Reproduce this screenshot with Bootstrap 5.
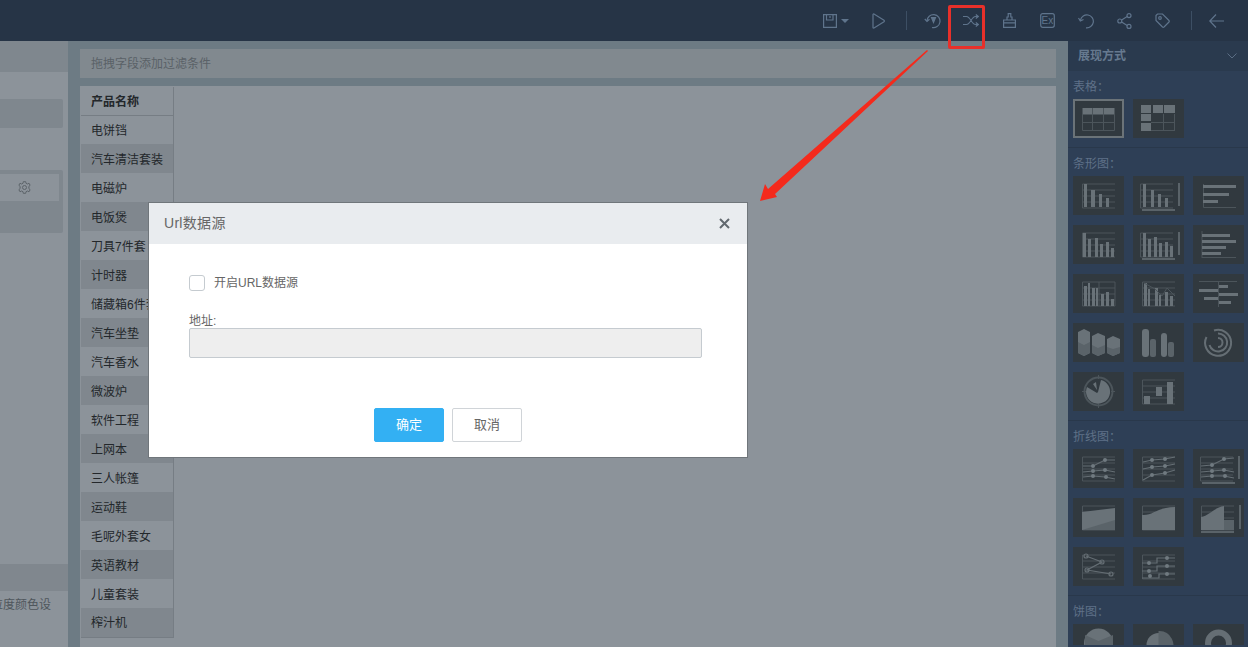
<!DOCTYPE html>
<html lang="zh">

<head>
  <meta charset="UTF-8" />
  <title>Url数据源</title>
  <link href="https://cdn.jsdelivr.net/npm/bootstrap@5.3.2/dist/css/bootstrap.min.css" rel="stylesheet">
  <style>
    html, body {
      height: 647px;
      overflow: hidden;
    }

    body {
      position: relative;
      width: 1248px;
      background: #6d7b84;
      font-family: "Liberation Sans", "Noto Sans CJK SC", sans-serif;
      font-size: 12px;
      color: #555;
    }

    /* 顶部工具栏 */
    .top-bar {
      height: 41px;
      background: #263446;
      color: #5f748c;
      padding-right: 8px;
    }

    .tb-slot {
      width: 38.25px;
    }

    .tb-save {
      width: 40px;
      padding-left: 2.5px;
    }

    .tb-play {
      width: 36px;
    }

    .tb-back {
      width: 48px;
    }

    .tb-sep {
      width: 1px;
      height: 19px;
      background: #3d4f64;
    }

    .tb-sep-first {
      margin: 0 7px 0 9px;
    }

    .tb-sep-last {
      margin-left: 9.5px;
    }

    .tb-svg {
      fill: none;
      stroke: currentColor;
      stroke-width: 1.2;
    }

    .tb-svg text {
      fill: currentColor;
      stroke: none;
      font-size: 10px;
      font-family: "Liberation Sans", sans-serif;
    }

    .caret-shape {
      width: 0;
      height: 0;
      border-left: 4px solid transparent;
      border-right: 4px solid transparent;
      border-top: 4px solid #5f748c;
    }

    .work-area {
      height: 606px;
    }

    /* 左侧面板 */
    .left-pane {
      width: 68px;
      background: #8c939a;
      overflow: hidden;
    }

    .left-head {
      height: 31px;
      background: #7f878e;
    }

    .left-block {
      margin-top: 27px;
      margin-right: 5px;
      height: 29px;
      background: #7f878e;
      border-radius: 0 2px 2px 0;
    }

    .left-block-tall {
      margin-top: 42px;
      margin-right: 5px;
      height: 63px;
      background: #7f878e;
      border-radius: 0 2px 2px 0;
      padding: 4px 4px 0 0;
    }

    .left-row {
      height: 27px;
      background: #8c939a;
      color: #5d646a;
      padding-left: 18px;
    }

    .left-band {
      margin-top: 331px;
      height: 27px;
      background: #80878e;
    }

    .left-note {
      margin-top: 5px;
      padding-right: 17px;
      height: 18px;
      line-height: 18px;
      white-space: nowrap;
      color: #4f565c;
    }

    /* 中间区域 */
    .center-pane {
      width: 1000px;
      padding: 8px 12px 0;
    }

    .filter-bar {
      height: 29px;
      line-height: 30px;
      padding-left: 11px;
      background: #81898f;
      color: #5a6167;
      margin-bottom: 8px;
    }

    .canvas-box {
      height: 561px;
      background: #8c939a;
      padding: 1px 0 0 1px;
    }

    .prod-table {
      width: 93px;
      table-layout: fixed;
      border-right: 1px solid #767d84;
      border-bottom: 1px solid #767d84;
    }

    .prod-table th,
    .prod-table td {
      height: 29px;
      padding: 2px 0 0 10px;
      line-height: 20px;
      vertical-align: middle;
      font-size: 12px;
      white-space: nowrap;
      overflow: hidden;
      color: #23272b;
      background: #8c939a;
      border: 0;
      box-shadow: none;
    }

    .prod-table th {
      height: 28px;
      font-weight: 700;
      border-bottom: 1px solid #767d84;
    }

    .prod-table tbody tr:nth-child(even) td {
      background: #80878e;
    }

    /* 右侧展现方式 */
    .view-pane {
      width: 180px;
      background: #2e3f56;
      overflow: hidden;
    }

    .view-head {
      height: 30px;
      padding: 0 11px 0 10px;
      background: #2a3a4e;
      color: #66798f;
      font-weight: 700;
    }

    .view-sec {
      padding: 4px 4px 9px 5px;
      border-bottom: 1px solid #29384b;
    }

    .view-sec-first {
      padding-top: 6px;
    }

    .view-label {
      height: 18px;
      line-height: 21px;
      margin-bottom: 6px;
      color: #5f7188;
      font-family: "Noto Sans CJK TC", sans-serif;
    }

    .view-sec-first .view-label {
      margin-bottom: 4px;
      line-height: 18px;
    }

    .tile-grid {
      display: grid;
      grid-template-columns: repeat(3, 51px);
      column-gap: 9px;
      row-gap: 10px;
    }

    .chart-tile {
      display: block;
      width: 51px;
      height: 39px;
      background: #31393f;
    }

    .tile-cut {
      height: 21px;
    }

    .tile-on {
      outline: 2px solid #6b7378;
      outline-offset: -2px;
    }

    .ln {
      fill: none;
      stroke: #4c555b;
      stroke-width: 1;
    }

    .ls {
      fill: none;
      stroke: #656e74;
      stroke-width: 1.2;
    }

    .fl {
      fill: #697278;
    }

    .fd {
      fill: #5a6369;
    }

    .dt {
      fill: none;
      stroke: #707a80;
      stroke-width: 4;
      stroke-linecap: round;
    }

    .rg {
      fill: none;
      stroke: #656e74;
      stroke-width: 2;
    }

    /* 弹窗 */
    .url-dialog {
      position: absolute;
      left: 148px;
      top: 202px;
      width: 600px;
      height: 256px;
      border: 1px solid #70767b;
      border-radius: 0;
      background: #fff;
    }

    .url-head {
      height: 41px;
      padding: 0 17px 0 15px;
      background: #e9ecef;
      border: 0;
      border-radius: 0;
    }

    .url-title {
      font-size: 14px;
      letter-spacing: .3px;
      color: #666;
    }

    .url-close {
      padding: 0;
      border: 0;
      background: none;
      line-height: 0;
    }

    .url-body {
      padding: 30px 45px 0 40px;
    }

    .url-check {
      width: 16px;
      height: 16px;
      margin: 0 9px 0 0;
      border: 1px solid #c5cbd0;
      border-radius: 2px;
    }

    .url-label {
      color: #666;
    }

    .url-addr-label {
      margin: 21px 0 0;
      height: 15px;
      line-height: 17px;
      color: #666;
    }

    .url-input {
      height: 30px;
      border: 1px solid #c5cbd0;
      border-radius: 2px;
    }

    .url-input:disabled {
      background: #eee;
    }

    .url-foot {
      margin-top: 50px;
      padding-left: 5px;
    }

    .url-btn {
      width: 70px;
      height: 34px;
      padding: 0;
      font-size: 13px;
      border-radius: 2px;
    }

    .url-ok,
    .url-ok:hover {
      background: #33b0f3;
      border-color: #33b0f3;
      color: #fff;
    }

    .url-cancel,
    .url-cancel:hover {
      background: #fff;
      border: 1px solid #d0d4d8;
      color: #666;
    }

    /* 标注 */
    .mark-box {
      position: absolute;
      left: 948px;
      top: 5px;
      width: 37px;
      height: 44px;
      border: 3px solid #e8302a;
      border-radius: 2px;
    }

    .mark-arrow {
      position: absolute;
      left: 0;
      top: 0;
      pointer-events: none;
    }
  </style>
</head>

<body>
  <!-- 图表缩略图 -->
  <svg width="0" height="0" class="d-block position-absolute">
    <defs>
      <g id="grid">
        <path class="ln" d="M9.5 8H42M9.5 14H42M9.5 20H42M9.5 26H42M9.5 32H42M9.5 8V32" />
      </g>
      <g id="legend">
        <path class="fd" d="M45 7h2v23h-2zM9 33h33v2H9z" />
      </g>
      <symbol id="t1" viewBox="0 0 51 39">
        <path class="fl" d="M9 9h10v6H9zM20 9h10v6H20zM31 9h10v6H31z" />
        <path class="ln" d="M9.500 9V31.500H41.500V9M9.500 15.500H41.500M9.500 23.500H41.500M19.500 9V31M30.500 9V31" />
      </symbol>
      <symbol id="t2" viewBox="0 0 51 39">
        <path class="fl" d="M8 6h10v8H8zM20 6h10v8H20zM31 6h11v8H31zM8 15h10v7H8zM8 24h10v8H8z" />
        <path class="ln" d="M18 23.500H42M18 31.500H42M30.500 15V32M41.500 15V32" />
      </symbol>
      <symbol id="b1" viewBox="0 0 51 39">
        <use href="#grid" />
        <path class="fl" d="M11 8h3v23h-3zM18 14h4v17h-4zM26 18h3v13h-3zM33 22h3v9h-3z" />
      </symbol>
      <symbol id="b2" viewBox="0 0 51 39">
        <use href="#grid" x="-2" />
        <use href="#legend" />
        <path class="fl" d="M10 8h3v23h-3zM18 14h3v17h-3zM25 18h3v13h-3zM32 22h3v9h-3z" />
      </symbol>
      <symbol id="b3" viewBox="0 0 51 39">
        <path class="ln" d="M10.500 8V31.500H43" />
        <path class="fl" d="M10 9h33v3H10zM10 17h26v3H10zM10 24h15v3H10z" />
      </symbol>
      <symbol id="b4" viewBox="0 0 51 39">
        <use href="#grid" />
        <path class="fl" d="M10 8h3v24h-3zM15 14h3v18h-3zM22 13h3v19h-3zM27 19h3v13h-3zM33 17h3v15h-3zM38 23h3v9h-3z" />
      </symbol>
      <symbol id="b5" viewBox="0 0 51 39">
        <use href="#grid" x="-2" />
        <use href="#legend" />
        <path class="fl" d="M10 8h3v24h-3zM15 14h3v18h-3zM21 12h3v20h-3zM26 18h3v14h-3zM32 17h3v15h-3zM37 21h3v11h-3z" />
      </symbol>
      <symbol id="b6" viewBox="0 0 51 39">
        <path class="ln" d="M9 32.500H43M9 6V33" />
        <path class="fl" d="M9 9h28v3H9zM9 15h34v3H9zM9 21h24v3H9zM9 27h19v3H9z" />
      </symbol>
      <symbol id="b7" viewBox="0 0 51 39">
        <use href="#grid" />
        <path class="ln" d="M42 8V32M26 8V32" />
        <path class="fl" d="M11 12h3v20h-3zM15 9h2v23h-2zM19 14h3v18h-3zM23 14h2v18h-2zM28 20h3v12h-3zM33 18h3v14h-3zM38 25h3v7h-3z" />
      </symbol>
      <symbol id="b8" viewBox="0 0 51 39">
        <use href="#grid" />
        <path class="fl" d="M11 9h3v23h-3zM15 15h2v17h-2zM22 14h3v18h-3zM26 21h2v11h-2zM32 18h3v14h-3zM37 22h3v10h-3z" />
        <path class="ln" d="M11 9L22 15L29 22L34 14L42 22" />
      </symbol>
      <symbol id="b9" viewBox="0 0 51 39">
        <path class="ln" d="M6 7.500H44M25.500 7V33" />
        <path class="fl" d="M26 11h9v3h-9zM6 15h19v3H6zM26 19h19v3H26zM11 23h14v3H11zM26 27h12v3H26z" />
      </symbol>
      <symbol id="c1" viewBox="0 0 51 39">
        <path class="fl" d="M5 9L11 6L17 9V30L11 33L5 30zM19 13L25 10L32 13V30L25 33L19 30zM34 16L40 13L47 16V30L40 33L34 30z" />
        <path class="fd" d="M5 19L11 22L17 19V30L11 33L5 30zM19 22L25 25L32 22V30L25 33L19 30zM34 24L40 26L47 24V30L40 33L34 30z" />
      </symbol>
      <symbol id="c2" viewBox="0 0 51 39">
        <rect class="fl" x="9" y="6" width="7" height="28" rx="3" />
        <rect class="fd" x="17" y="16" width="6" height="18" rx="2" />
        <rect class="fl" x="28" y="10" width="6" height="24" rx="3" />
        <rect class="fd" x="35" y="19" width="6" height="15" rx="2" />
      </symbol>
      <symbol id="c3" viewBox="0 0 51 39">
        <path class="rg" d="M21 7.500A13 13 0 1 1 13.500 14" />
        <path class="rg" d="M25 10.500A9 9 0 1 1 16.500 22" />
        <path class="rg" d="M25 15A4.500 4.500 0 0 1 25 24" />
      </symbol>
      <symbol id="c4" viewBox="0 0 51 39">
        <circle class="ln" cx="25.500" cy="19.500" r="14" style="stroke-width:2" />
        <path class="fl" d="M25 20L28 8A12 12 0 1 1 14 15L24 21z" />
        <path class="fl" d="M20 12l3-2l1 8z" />
        <path class="ln" d="M25.500 3V7M25.500 32V36M9 19.500H13M38 19.500H42" />
      </symbol>
      <symbol id="c5" viewBox="0 0 51 39">
        <use href="#grid" />
        <path class="fl" d="M11 24h6v8h-6zM23 15h6v9h-6zM34 10h6v22h-6z" />
      </symbol>
      <symbol id="l1" viewBox="0 0 51 39">
        <use href="#grid" />
        <path class="ls" d="M10 17L20 17L32 11L42 11M10 23L20 22L32 21L42 23M10 28L20 27L32 28L42 30" />
        <path class="dt" d="M20 17h0M32 11h0M20 22h0M32 21h0M20 27h0M33 28h0" />
      </symbol>
      <symbol id="l2" viewBox="0 0 51 39">
        <use href="#grid" />
        <path class="ls" d="M10 13L19 11L32 10L42 8M10 20L19 18L32 17L42 15M10 31L19 26L32 24L42 21" />
        <path class="dt" d="M19 11h0M32 10h0M19 18h0M32 17h0M19 26h0M32 24h0" />
      </symbol>
      <symbol id="l3" viewBox="0 0 51 39">
        <use href="#grid" x="-2" />
        <use href="#legend" />
        <path class="ls" d="M8 17L19 16L31 10L41 9M8 23L19 22L31 21L41 23M8 28L19 27L31 27L41 29" />
        <path class="dt" d="M19 16h0M31 10h0M19 22h0M31 21h0M19 27h0M32 27h0" />
      </symbol>
      <symbol id="a1" viewBox="0 0 51 39">
        <use href="#grid" />
        <path class="fl" d="M9 14L42 10V32H9z" />
        <path class="fd" d="M9 32L42 22V32z" />
      </symbol>
      <symbol id="a2" viewBox="0 0 51 39">
        <use href="#grid" />
        <path class="fl" d="M9 17C20 18 24 9 42 9V32H9z" />
      </symbol>
      <symbol id="a3" viewBox="0 0 51 39">
        <use href="#grid" x="-1" />
        <path class="fd" d="M46 7h2v24h-2zM8 33h33v2H8z" />
        <path class="fl" d="M8 19C16 18 22 9 31 8V32H8z" />
        <path class="fd" d="M31 22H41V32H31z" />
      </symbol>
      <symbol id="l7" viewBox="0 0 51 39">
        <use href="#grid" />
        <path class="ls" d="M13 9L29 15L14 23L38 27" />
        <circle class="ls" cx="13" cy="9" r="2" />
        <circle class="ls" cx="29" cy="15" r="2" />
        <circle class="ls" cx="14" cy="23" r="2" />
        <circle class="ls" cx="38" cy="27" r="2" />
      </symbol>
      <symbol id="l8" viewBox="0 0 51 39">
        <use href="#grid" />
        <path class="ls" d="M9 16H24V11H42M9 24H24V19H42M9 31H26V27H42" />
        <path class="dt" d="M16 16h0M34 11h0M16 24h0M34 19h0M17 29h0M34 27h0" />
      </symbol>
      <symbol id="p1" viewBox="0 0 51 39">
        <circle class="fl" cx="25.500" cy="19" r="14.500" />
        <path class="fd" d="M25.500 17L12 11V34H40V11z" />
      </symbol>
      <symbol id="p2" viewBox="0 0 51 39">
        <circle class="fl" cx="25.500" cy="21" r="12" />
        <path class="fd" d="M25.500 21V7A14 14 0 0 1 37 30z" />
      </symbol>
      <symbol id="p3" viewBox="0 0 51 39">
        <circle class="rg" cx="25.500" cy="19" r="10.500" style="stroke-width:6" />
      </symbol>
    </defs>
  </svg>

  <!-- 工具栏 -->
  <div class="top-bar d-flex align-items-center justify-content-end">
    <div class="tb-save d-flex align-items-center gap-1">
      <svg class="tb-svg" width="14" height="14" viewBox="0 0 14 14">
        <path d="M.6 .6H13.400V13.400H.6zM3.500 .6V6H10V.6" />
        <path d="M7 2V4" />
      </svg>
      <span class="caret-shape"></span>
    </div>
    <div class="tb-play d-flex justify-content-center">
      <svg class="tb-svg" width="13" height="16" viewBox="0 0 13 16">
        <path d="M1 1.500C1 1 1.500 .8 2 1L12 7.300C12.500 7.700 12.500 8.300 12 8.700L2 15C1.500 15.200 1 15 1 14.500z" />
      </svg>
    </div>
    <div class="tb-sep tb-sep-first"></div>
    <div class="tb-slot d-flex justify-content-center">
      <svg class="tb-svg" width="17" height="16" viewBox="0 0 17 16">
        <path d="M3 8A6.500 6.500 0 1 1 8 14.500" />
        <path d="M.8 6L3 8.500L5.500 6.300" />
        <path d="M7.500 4.500H11.500L9.500 9.500z" fill="currentColor" />
      </svg>
    </div>
    <div class="tb-slot d-flex justify-content-center">
      <svg class="tb-svg" width="16" height="13" viewBox="0 0 16 13">
        <path d="M0 2.500H3.500C7.500 2.500 8.500 10.500 12.500 10.500H15M0 10.500H3.500C7.500 10.500 8.500 2.500 12.500 2.500H15" />
        <path d="M12.800 .5L15.300 2.500L12.800 4.500M12.800 8.500L15.300 10.500L12.800 12.500" />
      </svg>
    </div>
    <div class="tb-slot d-flex justify-content-center">
      <svg class="tb-svg" width="13" height="15" viewBox="0 0 13 15">
        <path d="M.6 7H12.400V14.400H.6zM.6 9.800H12.400M4 7V4H5.200V.6H7.800V4H9V7" />
      </svg>
    </div>
    <div class="tb-slot d-flex justify-content-center">
      <svg class="tb-svg" width="15" height="15" viewBox="0 0 15 15">
        <rect x=".7" y=".7" width="13.600" height="13.600" rx="2" />
        <text x="1.500" y="11">Ex</text>
      </svg>
    </div>
    <div class="tb-slot d-flex justify-content-center">
      <svg class="tb-svg" width="16" height="16" viewBox="0 0 16 16">
        <path d="M2.500 7A6.500 6.500 0 1 1 8 14.800" />
        <path d="M.5 5L2.300 8L5.500 6.500" />
      </svg>
    </div>
    <div class="tb-slot d-flex justify-content-center">
      <svg class="tb-svg" width="15" height="16" viewBox="0 0 15 16">
        <circle cx="2.800" cy="8" r="2" />
        <circle cx="12" cy="2.600" r="2" />
        <circle cx="12" cy="13.400" r="2" />
        <path d="M4.600 7L10.200 3.600M4.600 9L10.200 12.400" />
      </svg>
    </div>
    <div class="tb-slot d-flex justify-content-center">
      <svg class="tb-svg" width="15" height="15" viewBox="0 0 15 15">
        <path d="M1 2.500L2.500 1H7.500L14 7.500C14.400 8 14.400 8.500 14 9L9 14C8.500 14.400 8 14.400 7.500 14L1 7.500z" />
        <circle cx="5" cy="5" r="1.300" />
      </svg>
    </div>
    <div class="tb-sep tb-sep-last"></div>
    <div class="tb-back d-flex justify-content-center">
      <svg class="tb-svg" width="15" height="14" viewBox="0 0 15 14">
        <path d="M15 7H1M7 .5L.8 7L7 13.500" />
      </svg>
    </div>
  </div>

  <div class="work-area d-flex">
    <!-- 左侧 -->
    <div class="left-pane">
      <div class="left-head"></div>
      <div class="left-block"></div>
      <div class="left-block-tall">
        <div class="left-row d-flex align-items-center">
          <svg width="13" height="13" viewBox="0 0 13 13" fill="none" stroke="currentColor">
            <circle cx="6.500" cy="6.500" r="2" />
            <path d="M5.300 .7H7.700L8 2.300L9.500 3L11 2.200L12.100 4.300L10.900 5.400V7.600L12.100 8.700L11 10.800L9.500 10L8 10.700L7.700 12.300H5.300L5 10.700L3.500 10L2 10.800L.9 8.700L2.100 7.600V5.400L.9 4.300L2 2.200L3.500 3L5 2.300z" />
          </svg>
        </div>
      </div>
      <div class="left-band"></div>
      <div class="left-note d-flex justify-content-end">粒度颜色设</div>
    </div>

    <!-- 中间 -->
    <div class="center-pane">
      <div class="filter-bar">拖拽字段添加过滤条件</div>
      <div class="canvas-box">
        <table class="table mb-0 prod-table">
          <thead>
            <tr><th>产品名称</th></tr>
          </thead>
          <tbody>
            <tr><td>电饼铛</td></tr>
            <tr><td>汽车清洁套装</td></tr>
            <tr><td>电磁炉</td></tr>
            <tr><td>电饭煲</td></tr>
            <tr><td>刀具7件套</td></tr>
            <tr><td>计时器</td></tr>
            <tr><td>储藏箱6件套</td></tr>
            <tr><td>汽车坐垫</td></tr>
            <tr><td>汽车香水</td></tr>
            <tr><td>微波炉</td></tr>
            <tr><td>软件工程</td></tr>
            <tr><td>上网本</td></tr>
            <tr><td>三人帐篷</td></tr>
            <tr><td>运动鞋</td></tr>
            <tr><td>毛呢外套女</td></tr>
            <tr><td>英语教材</td></tr>
            <tr><td>儿童套装</td></tr>
            <tr><td>榨汁机</td></tr>
          </tbody>
        </table>
      </div>
    </div>

    <!-- 右侧 -->
    <div class="view-pane">
      <div class="view-head d-flex align-items-center justify-content-between">
        <span>展现方式</span>
        <svg width="10" height="6" viewBox="0 0 10 6" fill="none" stroke="#5a6d84">
          <path d="M.5 .5L5 5L9.500 .5" />
        </svg>
      </div>

      <div class="view-sec view-sec-first">
        <div class="view-label">表格：</div>
        <div class="tile-grid">
          <svg class="chart-tile tile-on"><use href="#t1" width="51" height="39" /></svg>
          <svg class="chart-tile"><use href="#t2" width="51" height="39" /></svg>
        </div>
      </div>

      <div class="view-sec">
        <div class="view-label">条形图：</div>
        <div class="tile-grid">
          <svg class="chart-tile"><use href="#b1" /></svg>
          <svg class="chart-tile"><use href="#b2" /></svg>
          <svg class="chart-tile"><use href="#b3" /></svg>
          <svg class="chart-tile"><use href="#b4" /></svg>
          <svg class="chart-tile"><use href="#b5" /></svg>
          <svg class="chart-tile"><use href="#b6" /></svg>
          <svg class="chart-tile"><use href="#b7" /></svg>
          <svg class="chart-tile"><use href="#b8" /></svg>
          <svg class="chart-tile"><use href="#b9" /></svg>
          <svg class="chart-tile"><use href="#c1" /></svg>
          <svg class="chart-tile"><use href="#c2" /></svg>
          <svg class="chart-tile"><use href="#c3" /></svg>
          <svg class="chart-tile"><use href="#c4" /></svg>
          <svg class="chart-tile"><use href="#c5" /></svg>
        </div>
      </div>

      <div class="view-sec">
        <div class="view-label">折线图：</div>
        <div class="tile-grid">
          <svg class="chart-tile"><use href="#l1" /></svg>
          <svg class="chart-tile"><use href="#l2" /></svg>
          <svg class="chart-tile"><use href="#l3" /></svg>
          <svg class="chart-tile"><use href="#a1" /></svg>
          <svg class="chart-tile"><use href="#a2" /></svg>
          <svg class="chart-tile"><use href="#a3" /></svg>
          <svg class="chart-tile"><use href="#l7" /></svg>
          <svg class="chart-tile"><use href="#l8" /></svg>
        </div>
      </div>

      <div class="view-sec">
        <div class="view-label">饼图：</div>
        <div class="tile-grid">
          <svg class="chart-tile tile-cut"><use href="#p1" width="51" height="39" /></svg>
          <svg class="chart-tile tile-cut"><use href="#p2" width="51" height="39" /></svg>
          <svg class="chart-tile tile-cut"><use href="#p3" width="51" height="39" /></svg>
        </div>
      </div>
    </div>
  </div>

  <!-- 弹窗 -->
  <div class="modal-content url-dialog">
    <div class="modal-header url-head">
      <span class="url-title">Url数据源</span>
      <button type="button" class="url-close" aria-label="关闭">
        <svg width="11" height="11" viewBox="0 0 11 11" stroke="#62696f" stroke-width="2">
          <path d="M1 1L10 10M10 1L1 10" />
        </svg>
      </button>
    </div>
    <div class="modal-body url-body">
      <div class="d-flex align-items-center">
        <input class="form-check-input url-check" type="checkbox" id="urlOpen">
        <label class="url-label" for="urlOpen">开启URL数据源</label>
      </div>
      <label class="d-block url-addr-label" for="urlAddr">地址:</label>
      <input class="form-control url-input" type="text" id="urlAddr" disabled>
      <div class="url-foot d-flex justify-content-center gap-2">
        <button type="button" class="btn url-btn url-ok">确定</button>
        <button type="button" class="btn url-btn url-cancel">取消</button>
      </div>
    </div>
  </div>

  <!-- 红色标注 -->
  <div class="mark-box"></div>
  <svg class="mark-arrow" width="1248" height="647" viewBox="0 0 1248 647">
    <path fill="#f42a1c" d="M928 51L775 194L777 197L760 201L765 184L768 189L927 50z" />
  </svg>

  <script src="https://cdn.jsdelivr.net/npm/bootstrap@5.3.2/dist/js/bootstrap.bundle.min.js"></script>
</body>

</html>
